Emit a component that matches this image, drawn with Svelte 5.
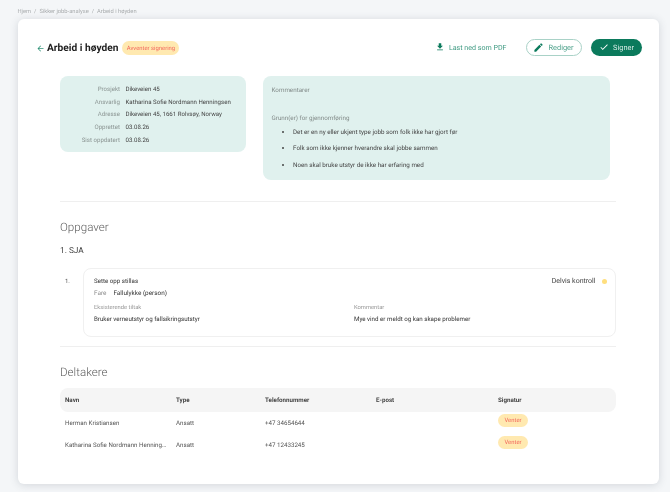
<script lang="ts">
	const info = [
		['Prosjekt', 'Dikeveien 45'],
		['Ansvarlig', 'Katharina Sofie Nordmann Henningsen'],
		['Adresse', 'Dikeveien 45, 1661 Rolvsøy, Norway'],
		['Opprettet', '03.08.26'],
		['Sist oppdatert', '03.08.26']
	];
	const reasons = [
		'Det er en ny eller ukjent type jobb som folk ikke har gjort før',
		'Folk som ikke kjenner hverandre skal jobbe sammen',
		'Noen skal bruke utstyr de ikke har erfaring med'
	];
	const people = [
		{ name: 'Herman Kristiansen', type: 'Ansatt', phone: '+47 34654644' },
		{ name: 'Katharina Sofie Nordmann Henningsen', type: 'Ansatt', phone: '+47 12433245' }
	];
</script>

<div class="page">
	<nav class="crumbs">
		<span>Hjem</span><i>/</i><span>Sikker jobb-analyse</span><i>/</i><span>Arbeid i høyden</span>
	</nav>

	<main class="card">
		<header class="top">
			<svg class="back" viewBox="0 0 24 24" width="9" height="9" aria-hidden="true">
				<path d="M20 11H7.8l5.6-5.6L12 4l-8 8 8 8 1.4-1.4L7.8 13H20z" fill="#2f9277" />
			</svg>
			<h1>Arbeid i høyden</h1>
			<span class="badge big">Avventer signering</span>
			<div class="actions">
				<button type="button" class="link">
					<svg viewBox="0 0 24 24" width="10" height="10" aria-hidden="true">
						<path d="M19 9h-4V3H9v6H5l7 7 7-7zM5 18v2h14v-2H5z" fill="#0b7a5c" />
					</svg>
					Last ned som PDF
				</button>
				<button type="button" class="btn outline">
					<svg viewBox="0 0 24 24" width="11" height="11" aria-hidden="true">
						<path d="M3 17.25V21h3.75L17.81 9.94l-3.75-3.75L3 17.25zM20.71 7.04a1 1 0 0 0 0-1.41l-2.34-2.34a1 1 0 0 0-1.41 0l-1.83 1.83 3.75 3.75 1.83-1.83z" fill="#0b7a5c" />
					</svg>
					Rediger
				</button>
				<button type="button" class="btn solid">
					<svg viewBox="0 0 24 24" width="10" height="10" aria-hidden="true">
						<path d="M9 16.17 4.83 12l-1.42 1.41L9 19 21 7l-1.41-1.41z" fill="#fff" />
					</svg>
					Signer
				</button>
			</div>
		</header>

		<div class="content">
			<section class="panels">
				<div class="panel facts">
					{#each info as [label, value]}
						<span class="fact-label">{label}</span>
						<span class="fact-value">{value}</span>
					{/each}
				</div>
				<div class="panel notes">
					<p class="note-title">Kommentarer</p>
					<p class="note-title reasons-title">Grunn(er) for gjennomføring</p>
					<ul>
						{#each reasons as reason}
							<li>{reason}</li>
						{/each}
					</ul>
				</div>
			</section>

			<hr class="first" />

			<h2>Oppgaver</h2>
			<h3>1. SJA</h3>

			<div class="task">
				<span class="num">1.</span>
				<div class="task-box">
					<div class="task-head">
						<div>
							<div class="task-name">Sette opp stillas</div>
							<div class="hazard"><span>Fare</span>Fallulykke (person)</div>
						</div>
						<div class="status">Delvis kontroll<i class="dot"></i></div>
					</div>
					<div class="task-cols">
						<div>
							<div class="small-label">Eksisterende tiltak</div>
							<div class="task-text">Bruker verneutstyr og fallsikringsutstyr</div>
						</div>
						<div>
							<div class="small-label">Kommentar</div>
							<div class="task-text">Mye vind er meldt og kan skape problemer</div>
						</div>
					</div>
				</div>
			</div>

			<hr class="second" />

			<h2>Deltakere</h2>
			<div class="table">
				<div class="row head">
					<span>Navn</span><span>Type</span><span>Telefonnummer</span><span>E-post</span><span>Signatur</span>
				</div>
				{#each people as p}
					<div class="row">
						<span class="name">{p.name}</span>
						<span>{p.type}</span>
						<span>{p.phone}</span>
						<span></span>
						<span class="sign"><span class="badge">Venter</span></span>
					</div>
				{/each}
			</div>
		</div>
	</main>
</div>

<style>
	:global(body) {
		margin: 0;
		background: #f4f6f8;
		font-family: Roboto, "Noto Sans", sans-serif;
		color: #3a3a3a;
		text-rendering: geometricPrecision;
	}
	.page {
		width: 670px;
		height: 492px;
		padding: 7px 11px 8px 17.5px;
		box-sizing: border-box;
		overflow: hidden;
		/* the reference is a downscaled capture, so everything is slightly soft */
		filter: blur(0.3px);
	}
	.crumbs {
		display: flex;
		gap: 3px;
		height: 10px;
		padding-bottom: 2px;
		align-items: center;
		font-size: 5.75px;
		color: #a9acae;
	}
	.crumbs i {
		font-style: normal;
	}
	.card {
		height: 465px;
		box-sizing: border-box;
		background: #fff;
		border-radius: 6px;
		box-shadow: 0 1px 8px rgba(60, 70, 90, 0.18);
		padding: 19px 17px 0 18px;
	}
	.top {
		display: flex;
		align-items: center;
		height: 20px;
	}
	.back {
		margin-right: 2.5px;
	}
	h1 {
		margin: 0 4px 0 0;
		font-size: 10.2px;
		font-weight: 700;
		color: #1e1e1e;
	}
	.badge {
		display: inline-flex;
		align-items: center;
		justify-content: center;
		box-sizing: border-box;
		padding-top: 1px;
		background: #ffe9b0;
		color: #f2685d;
		border-radius: 8px;
		height: 13px;
		width: 30px;
		font-size: 5.9px;
	}
	.badge.big {
		width: 57px;
		height: 14px;
		border-radius: 7px;
	}
	.actions {
		margin-left: auto;
		margin-top: -2px;
		display: flex;
		align-items: center;
	}
	button {
		font-family: inherit;
		display: flex;
		align-items: center;
		justify-content: center;
		padding: 0;
		box-sizing: border-box;
		background: none;
		border: 0;
		font-size: 7.4px;
		text-rendering: geometricPrecision;
	}
	.link {
		gap: 4px;
		font-size: 7.1px;
		color: #3f9a82;
		margin-right: 19px;
	}
	.btn {
		height: 17px;
		border-radius: 9px;
		gap: 4px;
	}
	.outline {
		width: 56px;
		border: 1px solid #a9d2c7;
		color: #4fa28c;
		margin-right: 9.5px;
	}
	.solid {
		width: 51px;
		background: #0b7a5c;
		color: #d7ece6;
	}
	.content {
		padding: 0 26.5px 0 24.5px;
	}
	.panels {
		display: flex;
		align-items: flex-start;
		gap: 17.5px;
		margin-top: 17.5px;
		padding-right: 5.5px;
	}
	.panel {
		background: #e0f1ee;
		border-radius: 8px;
		box-sizing: border-box;
	}
	.facts {
		width: 185.5px;
		height: 76px;
		padding: 7.5px 0 0;
		display: grid;
		grid-template-columns: 60px 1fr;
		column-gap: 5.5px;
		grid-auto-rows: 12.7px;
		align-items: center;
		font-size: 6.1px;
	}
	.fact-label {
		text-align: right;
		color: #8a9492;
	}
	.fact-value {
		color: #444;
		white-space: nowrap;
	}
	.notes {
		flex: 1;
		height: 104px;
		padding: 10px 8.5px 0;
		font-size: 6.25px;
		color: #444;
	}
	.note-title {
		margin: 0;
		color: #838c8a;
		line-height: 8px;
	}
	.reasons-title {
		margin-top: 20px;
	}
	ul {
		margin: 6.3px 0 0;
		padding: 0 0 0 21.5px;
		list-style: disc;
	}
	li {
		height: 16.5px;
		line-height: 8px;
	}
	hr {
		border: 0;
		height: 1px;
		background: #efefef;
		margin: 0;
	}
	.first {
		margin-top: 21px;
	}
	h2 {
		margin: 0;
		font-weight: 300;
		font-size: 11.6px;
		line-height: 16px;
		color: #5e5e5e;
	}
	.first + h2 {
		margin-top: 17px;
	}
	h3 {
		margin: 10px 0 0;
		font-weight: 400;
		font-size: 8.3px;
		line-height: 12px;
		color: #444;
	}
	.task {
		display: flex;
		margin-top: 11px;
	}
	.num {
		width: 23px;
		padding: 10px 0 0 5px;
		box-sizing: border-box;
		font-size: 6px;
		color: #555;
	}
	.task-box {
		flex: 1;
		height: 69px;
		box-sizing: border-box;
		border: 1px solid #f0f0f0;
		border-radius: 8px;
		padding: 8px 8px 0 10px;
		font-size: 6.2px;
		color: #333;
	}
	.task-head {
		display: flex;
		justify-content: space-between;
		align-items: flex-start;
	}
	.task-name {
		line-height: 9px;
	}
	.hazard {
		line-height: 9px;
		margin-top: 3px;
		font-size: 6.4px;
	}
	.hazard span {
		color: #8b8b8b;
		margin-right: 7px;
	}
	.status {
		display: flex;
		align-items: center;
		font-size: 7px;
		line-height: 9px;
		color: #444;
	}
	.dot {
		width: 5px;
		height: 5px;
		margin-left: 6px;
		border-radius: 50%;
		background: #ffdf7e;
	}
	.task-cols {
		display: grid;
		grid-template-columns: 260px 1fr;
		margin-top: 6.5px;
	}
	.small-label {
		color: #979797;
		font-size: 5.8px;
		line-height: 8px;
	}
	.task-text {
		margin-top: 2.8px;
		line-height: 8px;
	}
	.second {
		margin-top: 9px;
	}
	.second + h2 {
		margin-top: 17.5px;
	}
	.table {
		margin-top: 7.5px;
		font-size: 6.2px;
	}
	.row {
		display: grid;
		grid-template-columns: 111px 89px 111px 122px 1fr;
		padding-left: 5px;
		height: 22px;
		align-items: center;
		color: #555;
	}
	.row.head {
		height: 24px;
		background: #f5f5f5;
		border-radius: 8px;
		font-weight: 700;
		color: #444;
	}
	.name {
		max-width: 102px;
		white-space: nowrap;
		overflow: hidden;
		text-overflow: ellipsis;
	}
	.sign {
		display: flex;
		margin-top: -4px;
	}
</style>
